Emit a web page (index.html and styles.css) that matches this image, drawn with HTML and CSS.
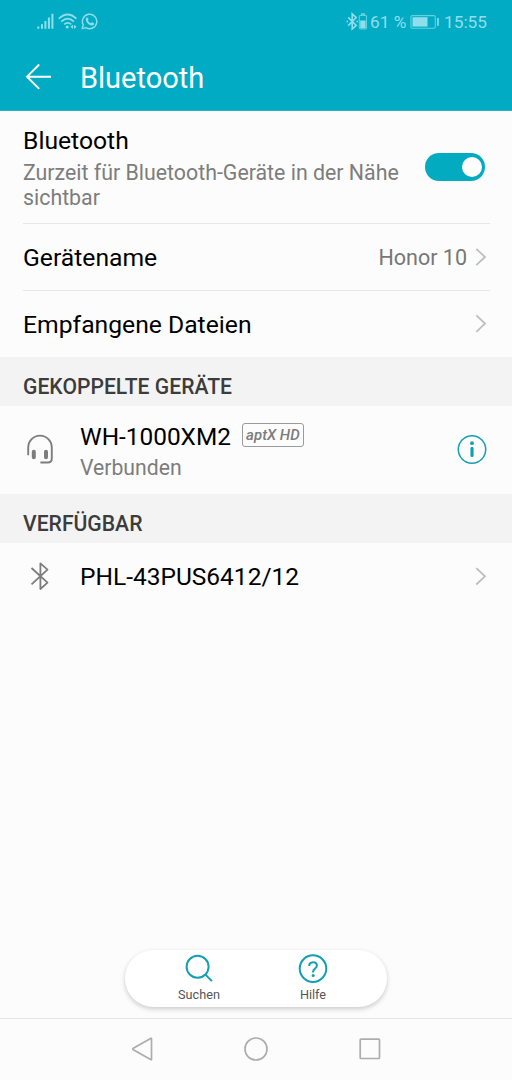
FILE: index.html
```html
<!DOCTYPE html>
<html lang="de">
<head>
<meta charset="utf-8">
<title>Bluetooth</title>
<link rel="stylesheet" href="styles.css">
</head>
<body>
<div class="screen">
  <header class="header">
    <div class="status">
      <div class="status-left">
        <svg width="62" height="20" viewBox="36 12 62 20" fill="none" stroke="currentColor">
          <path d="M38.3 28.8v-2.4M42 28.8v-4.6M45.4 28.8v-7.8M48.9 28.8v-11.4M52.4 28.8v-15" stroke-width="2"/>
          <path d="M58.8 18.6Q67.7 10.4 76.4 18.6M61.3 21.6Q67.7 15.8 73.9 21.6M64.2 24.4Q67.7 21.4 71.2 24.4" stroke-width="1.7"/>
          <circle cx="67.2" cy="27" r="1.5" fill="currentColor" stroke="none"/>
          <path d="M73 24.7v4.2L70.4 26.8zM74 24.7v4.2L76.6 26.8z" fill="currentColor" stroke="none"/>
          <path d="M82.1 28.6l1.2-3.7a7.2 7.2 0 1 1 2.6 2.7z" stroke-width="1.4" stroke-linejoin="round"/>
          <path d="M86.4 17.8c.8-.7 1.3-.4 1.7.5.5 1.2.6 1.4-.2 2.2.7 1.3 1.7 2.2 3 2.8.9-1.2 1.1-1.2 2.5-.4 1 .5 1 .9.3 1.8-1 1.1-2.7.9-4.7-.3-2.4-1.7-4.2-4.6-2.6-6.6z" fill="currentColor" stroke="none"/>
        </svg>
      </div>
      <div class="status-right">
        <svg width="23" height="20" viewBox="346 12 23 20" fill="none" stroke="currentColor">
          <path d="M348.2 17.4l8 8-4 3.6V13.9l4 3.7-8 8" stroke-width="1.6"/>
          <path d="M346.5 21.5h1.5M356.4 21.5h1.5" stroke-width="1.5"/>
          <rect x="359.3" y="15.4" width="7.2" height="13.6" rx="1.2" stroke-width="1.1" opacity=".7"/>
          <path d="M361 14h4" stroke-width="1.6" opacity=".7"/>
          <path d="M360.2 20.5h5.4v7.8h-5.4z" fill="currentColor" stroke="none"/>
        </svg>
        <span class="percent">61 %</span>
        <svg width="30" height="16" viewBox="410 14 30 16" fill="none" stroke="currentColor">
          <rect x="410.9" y="15.6" width="24.4" height="12.6" rx="1.5" stroke-width="1.1" opacity=".7"/>
          <path d="M412.5 17.2h15v9.4h-15z" fill="currentColor" stroke="none"/>
          <path d="M438 18v7.8" stroke-width="1.6"/>
        </svg>
        <span class="time">15:55</span>
      </div>
    </div>
    <div class="appbar">
      <svg width="28" height="28" viewBox="0 0 28 28" fill="none" stroke="#fff" stroke-width="1.9"><path d="M15.2 1.5L3 13.7l12.2 12.2M3 13.7h24"/></svg>
      <h1 class="title">Bluetooth</h1>
    </div>
  </header>
  <main class="content">
    <div class="row row-toggle">
      <div class="texts">
        <div class="label">Bluetooth</div>
        <div class="sub">Zurzeit für Bluetooth-Geräte in der Nähe<br>sichtbar</div>
      </div>
      <div class="switch"><span class="knob"></span></div>
    </div>
    <div class="row row-name">
      <div class="label">Gerätename</div>
      <div class="value">Honor 10</div>
      <svg class="chevron" width="12" height="20" viewBox="0 0 12 20"><path d="M1.3 1.8L10 10l-8.7 8.2"/></svg>
    </div>
    <div class="row row-files">
      <div class="label">Empfangene Dateien</div>
      <svg class="chevron" width="12" height="20" viewBox="0 0 12 20"><path d="M1.3 1.4L10 9.6l-8.7 8.2"/></svg>
    </div>
    <h2 class="section">GEKOPPELTE GERÄTE</h2>
    <div class="device device-paired">
      <svg class="device-icon" width="32" height="32" viewBox="24 434 32 32" fill="none" stroke="#7d7d7d">
        <path d="M28.2 455.3v-7.6a11.8 12.1 0 0 1 23.6 0v10.8q0 4-4 4h-7.4" stroke-width="1.9"/>
        <path d="M33.8 451.8v5.5M46 451.8v5.5" stroke-width="4" stroke-linecap="round"/>
      </svg>
      <div class="device-texts">
        <div class="name-line"><span class="label name">WH-1000XM2</span><span class="badge">aptX HD</span></div>
        <div class="sub">Verbunden</div>
      </div>
      <svg class="info" width="30" height="30" viewBox="0 0 30 30" fill="none" stroke="#13a0b0">
        <circle cx="15" cy="14.5" r="13.7" stroke-width="1.5"/>
        <path d="M15 13.4v7.1" stroke-width="3.2" stroke-linecap="round"/>
        <circle cx="15" cy="8.2" r="1.9" fill="#13a0b0" stroke="none"/>
      </svg>
    </div>
    <h2 class="section">VERFÜGBAR</h2>
    <div class="device device-available">
      <svg class="device-icon" width="32" height="32" viewBox="24 560 32 32" fill="none" stroke="#7d7d7d" stroke-width="1.8" stroke-linejoin="round">
        <path d="M31.5 567l16 14.6-7.1 6.4V562.4l7.1 6.2-16 14.8"/>
      </svg>
      <div class="label model">PHL-43PUS6412/12</div>
      <svg class="chevron" width="12" height="20" viewBox="0 0 12 20"><path d="M1.3 1.1L10 9.3l-8.7 8.2"/></svg>
    </div>
  </main>
  <div class="actions">
    <div class="action">
      <svg width="30" height="30" viewBox="0 0 30 30" fill="none" stroke="#139faf" stroke-width="2"><circle cx="13.6" cy="12.8" r="11"/><path d="M21.4 20.6l6.5 6.5"/></svg>
      <span>Suchen</span>
    </div>
    <div class="action">
      <svg width="30" height="30" viewBox="0 0 30 30" fill="none" stroke="#139faf" stroke-width="2"><circle cx="15" cy="14.6" r="13.3"/><path d="M11.2 12c0-5 7.7-5.1 7.7-.6 0 3.1-3.8 3.2-3.8 6.5v.7"/><circle cx="15.1" cy="21.6" r="1.5" fill="#139faf" stroke="none"/></svg>
      <span>Hilfe</span>
    </div>
  </div>
  <nav class="nav">
    <svg width="24" height="26" viewBox="0 0 24 26"><path d="M21.5 2.8v20.4q0 .9-.9.4L3.3 13.8q-1.2-.8 0-1.6L20.6 2.4q.9-.5.9.4z"/></svg>
    <svg width="24" height="26" viewBox="0 0 24 26"><circle cx="12" cy="13" r="11"/></svg>
    <svg width="24" height="26" viewBox="0 0 24 26"><rect x="2.2" y="3.2" width="19.3" height="19.3" rx=".8"/></svg>
  </nav>
</div>
</body>
</html>
```
FILE: styles.css
```css
* { box-sizing: border-box; }
body { margin: 0; font-family: Roboto, sans-serif; background: #fcfcfc; color: #000; }
svg { display: block; flex: none; }
h1, h2 { margin: 0; font-weight: 400; }
.screen { width: 512px; height: 1080px; display: flex; flex-direction: column; overflow: hidden; white-space: nowrap; }
.header { height: 111px; background: #02abc4; border-bottom: 1px solid #2fb0c2; flex: none; }
.status { height: 44px; padding: 0 26px 0 36px; display: flex; justify-content: space-between; align-items: center; color: #8edfeb; }
.status-right { display: flex; align-items: center; font-size: 17.3px; line-height: 20px; }
.percent { width: 41px; padding-left: 1px; }
.time { width: 46px; padding-left: 4px; }
.appbar { height: 66px; display: flex; align-items: center; padding: 0 25px 0 24px; gap: 28px; }
.title { font-size: 29px; line-height: 34px; color: #fff; padding-top: 2px; }
.content { flex: 1; }
.row { margin: 0 22px 0 23px; display: flex; align-items: center; border-bottom: 1px solid #e7e7e7; }
.row-toggle { height: 113px; }
.row-name { height: 67px; }
.row-name .label, .row-name .value { padding-top: 2px; }
.row-files { height: 66px; border-bottom: 0; }
.row-files .label { padding-top: 1px; }
.texts { flex: 1; padding-top: 1px; }
.label { font-size: 24.7px; line-height: 30px; flex: 1; }
.sub { font-size: 21.35px; line-height: 25px; color: #7d7d7d; }
.row-toggle .sub { padding-top: 4px; }
.switch { width: 60px; height: 28px; border-radius: 14px; background: #02abc0; display: flex; align-items: center; justify-content: flex-end; padding-right: 3px; margin-right: 5px; }
.knob { width: 20px; height: 20px; border-radius: 50%; background: #fff; }
.value { font-size: 21.5px; line-height: 28px; color: #777; margin-right: 8px; }
.chevron { margin-right: 3px; fill: none; stroke: #bebebe; stroke-width: 1.8; }
.section { height: 49px; background: #f3f3f3; padding: 10px 23px 0; font-size: 21.15px; line-height: 39px; font-weight: 500; color: #3c3c3c; }
.device { display: flex; align-items: center; padding: 0 22px 0 24px; }
.device-paired { height: 88px; }
.device-available { height: 67px; }
.device-icon { margin-right: 24px; }
.device-texts { flex: 1; padding-top: 2px; }
.device-texts .sub { padding-top: 3px; font-size: 21.2px; }
.name-line { display: flex; align-items: flex-start; gap: 11px; }
.name { flex: none; font-size: 24.4px; }
.model { font-size: 24.5px; }
.badge { height: 24px; width: 62px; margin-top: 1px; border: 1px solid #9b9b9b; border-radius: 3px; font-size: 15px; line-height: 22px; font-style: italic; font-weight: 500; color: #7c7c7c; text-align: center; }
.info { margin-right: 3px; }
.actions { width: 262px; height: 57px; margin: 0 auto 11px; border-radius: 29px; background: #fff; box-shadow: 0 2px 5px rgba(0,0,0,.2); display: flex; padding: 0 17px; flex: none; }
.action { flex: 1; display: flex; flex-direction: column; align-items: center; padding-top: 4px; font-size: 12.7px; line-height: 16px; color: #555; gap: 3px; }
.nav { height: 62px; flex: none; border-top: 1px solid #e6e6e6; display: flex; justify-content: center; align-items: center; gap: 90px; padding-bottom: 1px; }
.nav svg { fill: none; stroke: #adadad; stroke-width: 1.7; }
```
